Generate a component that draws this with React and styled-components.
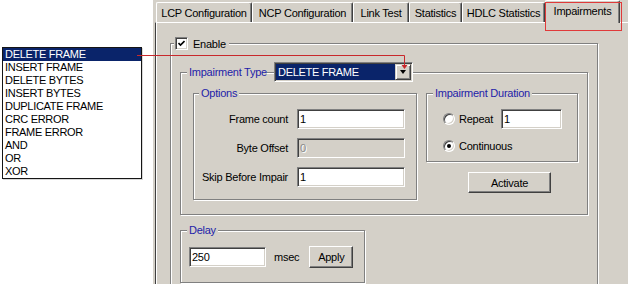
import React from 'react';
import styled, { createGlobalStyle } from 'styled-components';

const Global = createGlobalStyle`
  html, body { margin: 0; padding: 0; background: #fff; }
  body { font-family: "Liberation Sans", Arial, sans-serif; font-size: 11px; }
`;

const Screen = styled.div`
  position: relative;
  width: 628px;
  height: 284px;
  overflow: hidden;
  display: flex;
  background: #fff;
  font-family: "Liberation Sans", Arial, sans-serif;
  font-size: 11px;
  letter-spacing: -0.25px;
  color: #000;
`;

const LeftPane = styled.div`
  width: 153px;
  flex: none;
  box-sizing: border-box;
  padding: 47px 0 0 2px;
  background: #fff;
`;

const ListBox = styled.ul`
  margin: 0;
  padding: 0;
  list-style: none;
  width: 140px;
  height: 132px;
  box-sizing: border-box;
  border: 1px solid #151515;
  box-shadow: 1px 1px 0 #d8d8d8;
  background: #fff;
`;

const ListItem = styled.li`
  height: 13px;
  line-height: 13px;
  padding-left: 2px;
  white-space: nowrap;
  letter-spacing: -0.3px;
  background: ${p => (p.$selected ? '#0a246a' : 'transparent')};
  color: ${p => (p.$selected ? '#fff' : '#000')};
`;

const Window = styled.div`
  flex: 1;
  min-width: 0;
  background: #d4d0c8;
  padding-left: 2px;
  display: flex;
  flex-direction: column;
`;

const TabRow = styled.div`
  height: 22px;
  display: flex;
  align-items: flex-end;
  padding-left: 1px;
  flex: none;
`;

const Tab = styled.div`
  box-sizing: border-box;
  width: ${p => p.$w}px;
  height: ${p => (p.$active ? 23 : 20)}px;
  margin-bottom: ${p => (p.$active ? -1 : 0)}px;
  padding-bottom: ${p => (p.$active ? 3 : 0)}px;
  position: relative;
  z-index: ${p => (p.$active ? 2 : 1)};
  background: #d4d0c8;
  border-top: 1px solid #fff;
  border-left: 1px solid #fff;
  border-right: 1px solid #404040;
  box-shadow: inset -1px 0 0 #808080;
  border-radius: 2px 2px 0 0;
  display: flex;
  align-items: center;
  justify-content: center;
  white-space: nowrap;
`;

const Panel = styled.div`
  flex: 1;
  border-top: 1px solid #fff;
  border-left: 1px solid #404040;
  box-shadow: inset 1px 0 0 #fff;
  padding: 20px 0 0 14px;
`;

const Group = styled.div`
  position: relative;
  box-sizing: border-box;
  flex: none;
  width: ${p => p.$w}px;
  height: ${p => p.$h}px;
  border: 1px solid #808080;
  box-shadow: inset 1px 1px 0 #fff, 1px 1px 0 #fff;
`;

const EnableBody = styled.div`
  display: flex;
  flex-direction: column;
  padding: 28px 0 0 9px;
`;

const Caption = styled.div`
  position: absolute;
  left: ${p => p.$left}px;
  top: ${p => p.$top}px;
  height: ${p => p.$height || 13}px;
  display: flex;
  align-items: center;
  gap: ${p => p.$gap || 0}px;
`;

const CaptionText = styled.span`
  background: #d4d0c8;
  padding: 0 ${p => p.$pr ?? 2}px 0 2px;
  line-height: 13px;
  color: ${p => (p.$plain ? '#000' : '#1e22a8')};
  white-space: nowrap;
`;

const CheckCaption = styled.div`
  position: absolute;
  left: 3px;
  top: -7px;
  height: 13px;
  display: flex;
  align-items: center;
  gap: 5px;
  padding: 0 3px 0 1px;
  background: #d4d0c8;
`;

const CheckBox = styled.span`
  box-sizing: border-box;
  width: 13px;
  height: 13px;
  background: #fff;
  border: 1px solid;
  border-color: #808080 #fff #fff #808080;
  box-shadow: inset 1px 1px 0 #404040, inset -1px -1px 0 #d4d0c8;
  display: flex;
  align-items: center;
  justify-content: center;
`;

const Combo = styled.div`
  box-sizing: border-box;
  width: 139px;
  height: 20px;
  border: 1px solid;
  border-color: #808080 #fff #fff #808080;
  box-shadow: inset 1px 1px 0 #404040, inset -1px -1px 0 #d4d0c8;
  background: #fff;
  padding: 1px;
  display: flex;
`;

const ComboValue = styled.div`
  flex: 1;
  background: #0a246a;
  color: #fff;
  line-height: 16px;
  padding-left: 2px;
  letter-spacing: -0.3px;
  white-space: nowrap;
`;

const DropButton = styled.div`
  box-sizing: border-box;
  width: 16px;
  height: 16px;
  background: #d4d0c8;
  border: 1px solid;
  border-color: #d4d0c8 #404040 #404040 #d4d0c8;
  box-shadow: inset 1px 1px 0 #fff, inset -1px -1px 0 #808080;
  display: flex;
  align-items: center;
  justify-content: center;

  &::after {
    content: '';
    width: 0;
    height: 0;
    border-left: 3.5px solid transparent;
    border-right: 3.5px solid transparent;
    border-top: 4px solid #000;
  }
`;

const GroupRow = styled.div`
  display: flex;
  align-items: flex-start;
  gap: 9px;
  padding: 20px 0 0 12px;
`;

const FormGrid = styled.div`
  display: grid;
  grid-template-columns: 94px 108px;
  grid-auto-rows: 20px;
  column-gap: 9px;
  row-gap: 9px;
  align-items: center;
  padding-top: 15px;
`;

const FieldLabel = styled.span`
  text-align: right;
  white-space: nowrap;
`;

const TextInput = styled.input`
  box-sizing: border-box;
  width: ${p => p.$w || 108}px;
  height: 20px;
  margin: 0;
  padding: 0 0 0 2px;
  font: inherit;
  letter-spacing: inherit;
  color: ${p => (p.disabled ? '#8a8a8a' : '#000')};
  background: ${p => (p.disabled ? '#d4d0c8' : '#fff')};
  border: 1px solid;
  border-color: #808080 #fff #fff #808080;
  box-shadow: inset 1px 1px 0 #404040, inset -1px -1px 0 #d4d0c8;
  outline: none;
  text-shadow: ${p => (p.disabled ? '1px 1px 0 #fff' : 'none')};
  -webkit-text-fill-color: ${p => (p.disabled ? '#8a8a8a' : '#000')};
  opacity: 1;
`;

const DurationColumn = styled.div`
  display: flex;
  flex-direction: column;
  align-items: flex-start;
`;

const RadioList = styled.div`
  display: flex;
  flex-direction: column;
  gap: 7px;
  padding: 15px 0 0 16px;
`;

const RadioRow = styled.div`
  height: 20px;
  display: flex;
  align-items: center;
`;

const Radio = styled.span`
  position: relative;
  box-sizing: border-box;
  width: 12px;
  height: 12px;
  border-radius: 50%;
  background: #fff;
  border: 1px solid;
  border-color: #808080 #fff #fff #808080;
  box-shadow: inset 1px 1px 0 #404040, inset -1px -1px 0 #d4d0c8;
  margin-right: 4px;

  &::after {
    content: '';
    display: ${p => (p.$checked ? 'block' : 'none')};
    position: absolute;
    left: 3px;
    top: 3px;
    width: 4px;
    height: 4px;
    border-radius: 50%;
    background: #000;
  }
`;

const RadioText = styled.span`
  margin-right: ${p => p.$mr || 0}px;
  white-space: nowrap;
`;

const Button = styled.div`
  box-sizing: border-box;
  width: ${p => p.$w}px;
  height: ${p => p.$h}px;
  margin: ${p => p.$margin || 0};
  background: #d4d0c8;
  border: 1px solid;
  border-color: #fff #404040 #404040 #fff;
  box-shadow: inset -1px -1px 0 #808080;
  display: flex;
  align-items: center;
  justify-content: center;
  white-space: nowrap;
`;

const DelayRow = styled.div`
  display: flex;
  align-items: center;
  padding: 15px 0 0 8px;
`;

const Unit = styled.span`
  margin: 0 10px 0 8px;
`;

const Annotation = styled.svg`
  position: absolute;
  left: 0;
  top: 0;
  pointer-events: none;
  z-index: 10;
`;

const items = [
  'DELETE FRAME',
  'INSERT FRAME',
  'DELETE BYTES',
  'INSERT BYTES',
  'DUPLICATE FRAME',
  'CRC ERROR',
  'FRAME ERROR',
  'AND',
  'OR',
  'XOR',
];

const tabs = [
  { label: 'LCP Configuration', w: 96 },
  { label: 'NCP Configuration', w: 101 },
  { label: 'Link Test', w: 56 },
  { label: 'Statistics', w: 53 },
  { label: 'HDLC Statistics', w: 83 },
  { label: 'Impairments', w: 75, active: true },
];

export default function App() {
  return (
    <>
      <Global />
      <Screen>
        <LeftPane>
          <ListBox>
            {items.map((it, i) => (
              <ListItem key={it} $selected={i === 0}>
                {it}
              </ListItem>
            ))}
          </ListBox>
        </LeftPane>

        <Window>
          <TabRow>
            {tabs.map(t => (
              <Tab key={t.label} $w={t.w} $active={t.active}>
                {t.label}
              </Tab>
            ))}
          </TabRow>
          <Panel>
            <Group $w={428} $h={270}>
              <CheckCaption>
                <CheckBox>
                  <svg width="7" height="7" viewBox="0 0 7 7">
                    <path d="M0.5 3 L2.5 5 L6.5 1" stroke="#000" strokeWidth="1.6" fill="none" />
                  </svg>
                </CheckBox>
                <span>Enable</span>
              </CheckCaption>

              <EnableBody>
                <Group $w={408} $h={143}>
                  <Caption $left={6} $top={-11} $height={20} $gap={7}>
                    <CaptionText $pr={0}>Impairment Type</CaptionText>
                    <Combo>
                      <ComboValue>DELETE FRAME</ComboValue>
                      <DropButton />
                    </Combo>
                  </Caption>

                  <GroupRow>
                    <Group $w={224} $h={107}>
                      <Caption $left={5} $top={-7}>
                        <CaptionText>Options</CaptionText>
                      </Caption>
                      <FormGrid>
                        <FieldLabel>Frame count</FieldLabel>
                        <TextInput readOnly value="1" />
                        <FieldLabel>Byte Offset</FieldLabel>
                        <TextInput disabled value="0" />
                        <FieldLabel>Skip Before Impair</FieldLabel>
                        <TextInput readOnly value="1" />
                      </FormGrid>
                    </Group>

                    <DurationColumn>
                      <Group $w={152} $h={69}>
                        <Caption $left={6} $top={-7}>
                          <CaptionText>Impairment Duration</CaptionText>
                        </Caption>
                        <RadioList>
                          <RadioRow>
                            <Radio />
                            <RadioText $mr={8}>Repeat</RadioText>
                            <TextInput readOnly value="1" $w={61} />
                          </RadioRow>
                          <RadioRow>
                            <Radio $checked />
                            <RadioText>Continuous</RadioText>
                          </RadioRow>
                        </RadioList>
                      </Group>
                      <Button $w={83} $h={21} $margin="10px 0 0 42px">
                        Activate
                      </Button>
                    </DurationColumn>
                  </GroupRow>
                </Group>

                <Group $w={185} $h={53} style={{ marginTop: 15 }}>
                  <Caption $left={6} $top={-7}>
                    <CaptionText>Delay</CaptionText>
                  </Caption>
                  <DelayRow>
                    <TextInput readOnly value="250" $w={77} />
                    <Unit>msec</Unit>
                    <Button $w={44} $h={22}>
                      Apply
                    </Button>
                  </DelayRow>
                </Group>
              </EnableBody>
            </Group>
          </Panel>
        </Window>

        <Annotation width="628" height="284" viewBox="0 0 628 284">
          <path d="M137 55.5 H404.5 V66" stroke="#c8282c" strokeWidth="1" fill="none" />
          <polygon points="401.5,65 407.5,65 404.5,69" fill="#c8282c" />
          <rect x="545.5" y="2.5" width="76" height="28" stroke="#e03a3a" strokeWidth="1" fill="none" />
        </Annotation>
      </Screen>
    </>
  );
}
